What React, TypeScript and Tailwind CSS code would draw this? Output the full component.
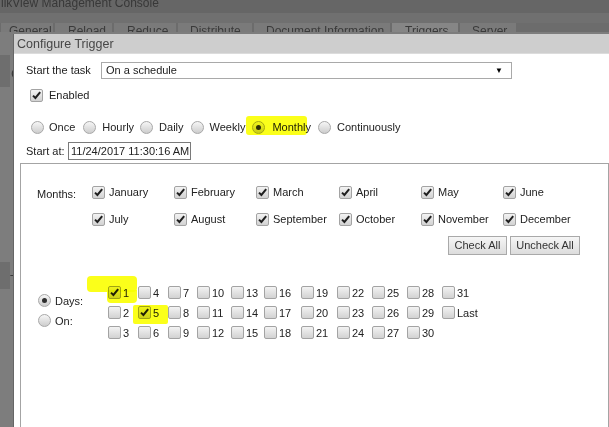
import React from "react";

const months = [
  ["January", "February", "March", "April", "May", "June"],
  ["July", "August", "September", "October", "November", "December"],
];

const dayCols = [
  ["1", "2", "3"],
  ["4", "5", "6"],
  ["7", "8", "9"],
  ["10", "11", "12"],
  ["13", "14", "15"],
  ["16", "17", "18"],
  ["19", "20", "21"],
  ["22", "23", "24"],
  ["25", "26", "27"],
  ["28", "29", "30"],
  ["31", "Last"],
];

const colWidths = ["w-[30px]", "w-[30px]", "w-[29px]", "w-[34px]", "w-[33px]", "w-[37px]", "w-[36px]", "w-[35px]", "w-[35px]", "w-[35px]", "w-[40px]"];

const tabs = [
  { label: "General", w: "w-[52px]", pl: "pl-[8px]" },
  { label: "Reload", w: "w-[57px]", pl: "pl-[13px]" },
  { label: "Reduce", w: "w-[62px]", pl: "pl-[13px]" },
  { label: "Distribute", w: "w-[74px]", pl: "pl-[12px]" },
  { label: "Document Information", w: "w-[136px]", pl: "pl-[12px]" },
  { label: "Triggers", w: "w-[66px]", pl: "pl-[13px]" },
  { label: "Server", w: "w-[56px]", pl: "pl-[12px]" },
];

function Box({ checked }: { checked?: boolean }) {
  return (
    <span className="inline-flex h-[13px] w-[13px] shrink-0 items-center justify-center rounded-[2px] border border-[#a3a3a3] bg-linear-to-b from-[#f3f3f3] to-[#d2d2d2]">
      {checked && (
        <svg width="11" height="11" viewBox="0 0 11 11" aria-hidden="true">
          <path d="M2 5.6 L4.4 8 L9.2 2.2" fill="none" stroke="#1f1f1f" strokeWidth="2" />
        </svg>
      )}
    </span>
  );
}

function Radio({ on }: { on?: boolean }) {
  return (
    <span className="inline-flex h-[13px] w-[13px] shrink-0 items-center justify-center rounded-full border border-[#a8a8a8] bg-linear-to-b from-[#f6f6f6] to-[#cdcdcd]">
      {on && <span className="h-[5px] w-[5px] rounded-full bg-[#2e2e2e]" />}
    </span>
  );
}

export default function App() {
  return (
    <div className="relative h-[427px] w-[609px] overflow-hidden bg-[#7d7d7d] font-['Liberation_Sans',Arial,sans-serif] text-[11px] text-[#222]">
      {/* console behind the dialog */}
      <div className="h-[15px] bg-[#666666] pl-[1px] text-[12px] leading-[10px] text-[#383838]">
        <span className="-mt-[2px] block">likView Management Console</span>
      </div>
      <div className="h-[10px] bg-[#707070]" />
      <div className="flex h-[9px] gap-[2px] bg-[#6c6c6c] pl-[1px]">
        {tabs.map((t) => (
          <div
            key={t.label}
            className={`${t.w} ${t.pl} h-[9px] overflow-hidden pt-[1px] text-[12px] leading-[14px] text-[#3a3a3a] ${t.label === "Triggers" ? "bg-[#868686]" : "bg-[#7a7a7a]"}`}
          >
            {t.label}
          </div>
        ))}
      </div>
      <div className="mt-[23px] h-[32px] w-[10px] bg-[#6e6e6e]" />
      <div className="absolute left-[11px] top-[64px] text-[13px] text-[#3a3a3a]">C</div>
      <div className="absolute left-0 top-[262px] h-[27px] w-[10px] bg-[#6e6e6e]" />
      <div className="absolute left-[10px] top-[270px] text-[13px] text-[#3a3a3a]">T</div>

      {/* dialog */}
      <div className="absolute left-[13px] top-[34px] bottom-0 w-[620px] border-l border-[#666666] bg-white">
        <div className="h-[20px] border-b border-[#dcdcdc] bg-[#cecece] pl-[3px] text-[12.5px] leading-[20px] text-[#474747]">
          Configure Trigger
        </div>

        <div className="px-[6px]">
          <div className="mt-[8px] flex h-[17px] items-center pl-[6px]">
            <span className="w-[75px]">Start the task</span>
            <div className="flex h-[17px] w-[411px] items-center justify-between border border-[#a9a9a9] pl-[4px] pr-[8px]">
              <span>On a schedule</span>
              <span className="text-[8px] text-black">▼</span>
            </div>
          </div>

          <div className="mt-[10px] flex h-[13px] items-center pl-[10px]">
            <Box checked />
            <span className="ml-[6px]">Enabled</span>
          </div>

          <div className="mt-[19px] flex h-[13px] items-center pl-[11px]">
            <Radio />
            <span className="ml-[5px] mr-[8px]">Once</span>
            <Radio />
            <span className="ml-[6px] mr-[6px]">Hourly</span>
            <Radio />
            <span className="ml-[6px] mr-[7px]">Daily</span>
            <Radio />
            <span className="ml-[6px] mr-[7px]">Weekly</span>
            <Radio on />
            <span className="ml-[7px] mr-[7px]">Monthly</span>
            <Radio />
            <span className="ml-[6px]">Continuously</span>
          </div>

          <div className="mt-[8px] flex h-[18px] items-center pl-[6px]">
            <span className="w-[42px]">Start at:</span>
            <div className="flex h-[18px] w-[123px] items-center border border-[#7a7a7a] pl-[2px]">11/24/2017 11:30:16 AM</div>
          </div>

          <div className="mt-[3px] h-[300px] w-[589px] border border-[#a4a4a4]">
            <div className="flex pl-[16px] pt-[15px]">
              <span className="mt-[7px] w-[55px]">Months:</span>
              <div className="grid grid-cols-[82px_82px_83px_82px_82px_82px]">
                {months.flat().map((m) => (
                  <div key={m} className="flex h-[27px] items-center">
                    <Box checked />
                    <span className="ml-[4px]">{m}</span>
                  </div>
                ))}
              </div>
            </div>

            <div className="mt-[3px] flex justify-end gap-[3px] pr-[28px]">
              <button className="h-[19px] w-[59px] border border-[#a9a9a9] bg-linear-to-b from-[#f6f6f6] to-[#dcdcdc] text-[11px] text-[#333]">
                Check All
              </button>
              <button className="h-[19px] w-[70px] border border-[#a9a9a9] bg-linear-to-b from-[#f6f6f6] to-[#dcdcdc] text-[11px] text-[#333]">
                Uncheck All
              </button>
            </div>

            <div className="mt-[27px] flex items-start pl-[17px]">
              <div className="mt-[12px] flex w-[70px] flex-col gap-[7px]">
                <div className="flex h-[13px] items-center">
                  <Radio on />
                  <span className="ml-[4px] mt-[2px] leading-[13px]">Days:</span>
                </div>
                <div className="flex h-[13px] items-center">
                  <Radio />
                  <span className="ml-[4px] mt-[2px] leading-[13px]">On:</span>
                </div>
              </div>
              <div className="flex">
                {dayCols.map((col, i) => (
                  <div key={i} className={`${colWidths[i]} flex flex-col`}>
                    {col.map((d) => (
                      <div key={d} className="flex h-[20px] items-center">
                        <Box checked={d === "1" || d === "5"} />
                        <span className="ml-[2px] mt-[2px]">{d}</span>
                      </div>
                    ))}
                  </div>
                ))}
              </div>
            </div>
          </div>
        </div>
      </div>

      {/* highlighter marks */}
      <div className="pointer-events-none absolute left-[246px] top-[116px] h-[19px] w-[61px] rounded-[3px] bg-[#fbff1a] mix-blend-multiply" />
      <div className="pointer-events-none absolute left-[87px] top-[276px] h-[16px] w-[50px] rounded-[4px] bg-[#fbff1a] mix-blend-multiply" />
      <div className="pointer-events-none absolute left-[107px] top-[290px] h-[13px] w-[30px] rounded-b-[4px] bg-[#fbff1a] mix-blend-multiply" />
      <div className="pointer-events-none absolute left-[133px] top-[305px] h-[19px] w-[35px] rounded-[2px] bg-[#fbff1a] mix-blend-multiply" />
    </div>
  );
}
